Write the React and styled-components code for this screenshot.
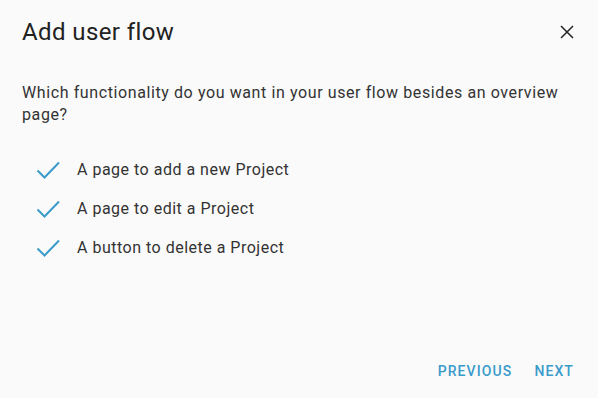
import React from 'react'
import styled, { createGlobalStyle } from 'styled-components'

const Global = createGlobalStyle`
  html, body { margin: 0; padding: 0; background: #fafafa; }
  body { font-family: Roboto, "Liberation Sans", sans-serif; }
`

const items = [
  'A page to add a new Project',
  'A page to edit a Project',
  'A button to delete a Project',
]

const CheckIcon = () => (
  <svg width="24" height="24" viewBox="0 0 24 24">
    <path d="M1.5 12.5 L8.5 19.5 L23 4.5" fill="none" stroke="#3a9bcb" strokeWidth="2" />
  </svg>
)

const App = () => (
  <>
    <Global />
    <Dialog>
      <Header>
        <Title>Add user flow</Title>
        <Close aria-label="close">
          <svg width="14" height="14" viewBox="0 0 14 14">
            <path d="M1 1 L13 13 M13 1 L1 13" stroke="#222" strokeWidth="1.5" />
          </svg>
        </Close>
      </Header>
      <Content>
        <Question>Which functionality do you want in your user flow besides an overview page?</Question>
        <List>
          {items.map((t) => (
            <Item key={t}>
              <CheckIcon />
              <span>{t}</span>
            </Item>
          ))}
        </List>
      </Content>
      <Actions>
        <ActionButton>Previous</ActionButton>
        <ActionButton>Next</ActionButton>
      </Actions>
    </Dialog>
  </>
)

const Dialog = styled.div`
  width: 598px;
  height: 398px;
  box-sizing: border-box;
  background: #fafafa;
  display: flex;
  flex-direction: column;
`

const Header = styled.div`
  display: flex;
  align-items: center;
  justify-content: space-between;
  padding: 18px 22px 0 22px;
`

const Title = styled.h2`
  margin: 0;
  font-size: 24px;
  line-height: 28px;
  font-weight: 400;
  color: #222;
  letter-spacing: 0.4px;
`

const Close = styled.button`
  border: none;
  background: none;
  padding: 0;
  margin-right: 2px;
  display: flex;
  cursor: pointer;
`

const Content = styled.div`
  padding: 36px 22px 0 22px;
  flex: 1;
`

const Question = styled.p`
  margin: 0;
  font-size: 16px;
  line-height: 22px;
  color: #333;
  letter-spacing: 0.6px;
`

const List = styled.ul`
  list-style: none;
  margin: 32px 0 0 0;
  padding: 0 0 0 14px;
  display: flex;
  flex-direction: column;
  gap: 15px;
`

const Item = styled.li`
  display: flex;
  align-items: center;
  gap: 17px;
  font-size: 16px;
  line-height: 24px;
  color: #333;
  letter-spacing: 0.5px;
`

const Actions = styled.div`
  display: flex;
  justify-content: flex-end;
  gap: 6px;
  padding: 0 16px 11px 0;
`

const ActionButton = styled.button`
  border: none;
  background: none;
  font-family: Roboto, "Liberation Sans", sans-serif;
  font-size: 14px;
  font-weight: 500;
  text-transform: uppercase;
  letter-spacing: 1.1px;
  color: #3a9bcb;
  padding: 8px 8px;
  cursor: pointer;
`

export default App
